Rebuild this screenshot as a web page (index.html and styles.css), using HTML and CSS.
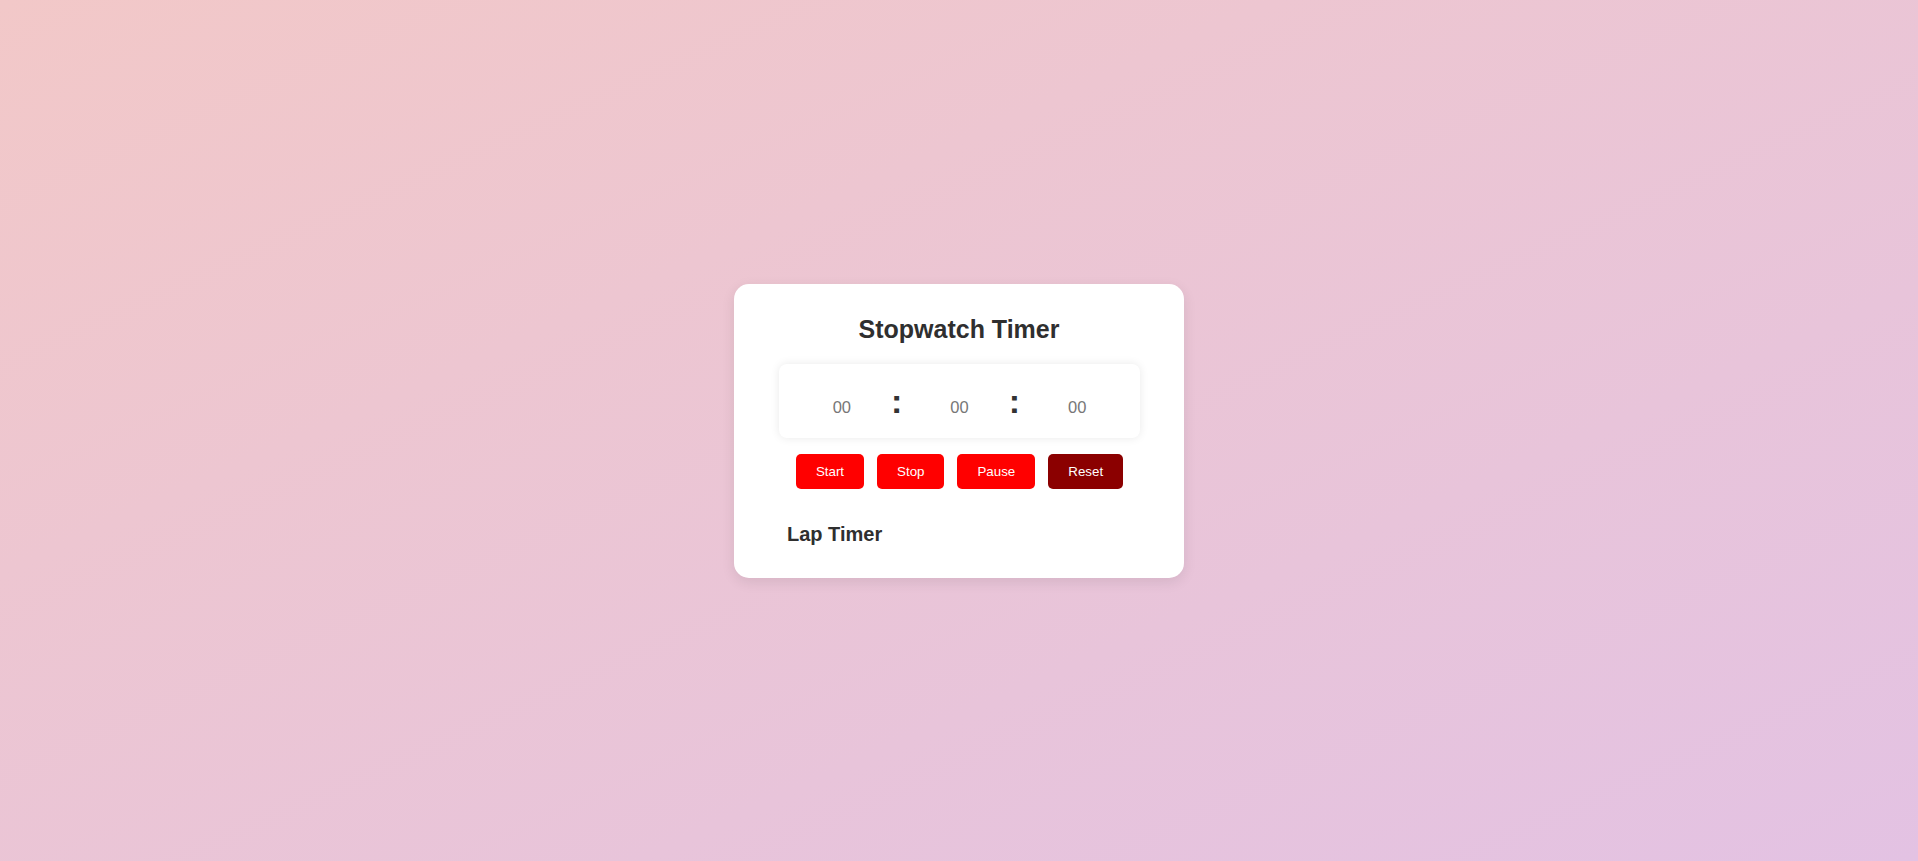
FILE: index.html
```html
<!DOCTYPE html>
<html lang="en">
<head>
<meta charset="utf-8">
<title>Stopwatch Timer</title>
<link rel="stylesheet" href="styles.css">
</head>
<body>
<main class="page">
  <section class="card">
    <h1 class="title">Stopwatch Timer</h1>
    <div class="display">
      <span class="num">00</span>
      <span class="colon">:</span>
      <span class="num">00</span>
      <span class="colon">:</span>
      <span class="num">00</span>
    </div>
    <div class="controls">
      <button class="btn">Start</button>
      <button class="btn">Stop</button>
      <button class="btn">Pause</button>
      <button class="btn btn-reset">Reset</button>
    </div>
    <h2 class="lap-title">Lap Timer</h2>
    <ul class="laps"></ul>
  </section>
</main>
</body>
</html>
```

FILE: styles.css
```css
html, body {
  margin: 0;
  padding: 0;
  height: 100%;
}

body {
  font-family: "Liberation Sans", Arial, sans-serif;
  background: linear-gradient(to bottom right, #f2c8c8, #e3c2e3);
}

.page {
  height: 100%;
  display: flex;
  align-items: center;
  justify-content: center;
  padding-top: 1px;
  box-sizing: border-box;
}

.card {
  width: 450px;
  box-sizing: border-box;
  background: #fff;
  border-radius: 15px;
  box-shadow: 0 4px 14px rgba(0, 0, 0, 0.09);
  padding: 31px 0 32px;
  display: flex;
  flex-direction: column;
  align-items: center;
}

.title {
  margin: 0;
  font-size: 25px;
  font-weight: bold;
  color: #2f2f2f;
  line-height: 29px;
}

.display {
  margin-top: 20px;
  width: 361px;
  height: 74px;
  box-sizing: border-box;
  background: #fff;
  border-radius: 8px;
  box-shadow: 0 0 10px rgba(0, 0, 0, 0.09);
  display: flex;
  justify-content: center;
  align-items: baseline;
  padding-top: 18px;
  padding-left: 1px;
}

.num {
  font-size: 16.5px;
  color: #777;
}

.colon {
  font-size: 34px;
  font-weight: bold;
  color: #333;
  margin: 0 48px 0 40px;
}

.controls {
  margin-top: 16px;
  display: flex;
  gap: 13px;
  padding-left: 1px;
}

.btn {
  font-family: "Liberation Sans", Arial, sans-serif;
  font-size: 13.333px;
  line-height: 15px;
  padding: 10px 20px;
  border: none;
  border-radius: 5px;
  background: #ff0000;
  color: #fff;
}

.btn-reset {
  background: #8b0000;
}

.lap-title {
  align-self: flex-start;
  margin: 34px 0 0 53px;
  font-size: 20px;
  line-height: 23px;
  font-weight: bold;
  color: #2f2f2f;
}

.laps {
  margin: 0;
  padding: 0;
  list-style: none;
}
```
